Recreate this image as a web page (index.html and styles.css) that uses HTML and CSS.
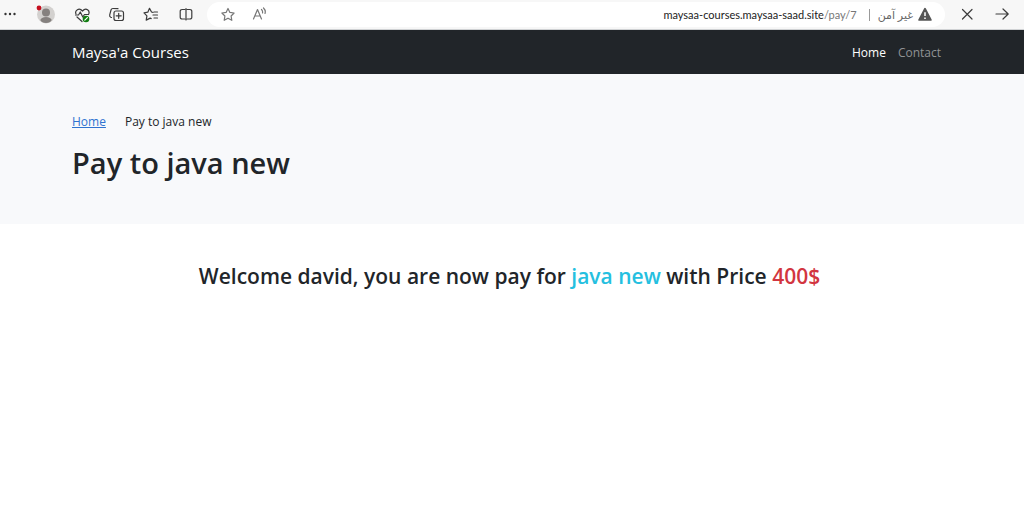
FILE: index.html
```html
<!DOCTYPE html>
<html lang="en">
<head>
<meta charset="utf-8">
<meta name="viewport" content="width=device-width, initial-scale=1">
<title>Pay to java new</title>
<link rel="stylesheet" href="styles.css">
</head>
<body>
<div class="toolbar">
  <div class="tools">
    <button class="tool" aria-label="Menu"><svg viewBox="0 0 20 20"><g fill="#333"><circle cx="5.500" cy="9" r="1.200"/><circle cx="10" cy="9" r="1.200"/><circle cx="14.500" cy="9" r="1.200"/></g></svg></button>
    <button class="tool" aria-label="Profile"><svg viewBox="0 0 20 20"><circle cx="11" cy="9.500" r="9" fill="#d3d1cf"/><circle cx="11" cy="7.500" r="4" fill="#85817f"/><ellipse cx="11" cy="15" rx="5.600" ry="2.900" fill="#85817f"/><circle cx="4" cy="3" r="2.400" fill="#c50f1f"/></svg></button>
    <button class="tool" aria-label="Browser essentials"><svg viewBox="0 0 20 20" class="line"><path d="M6 9C4.500 5.500 9 2 12.500 6 16 2 20.500 5.500 18.500 9.500M7 12l5 4.500"/><path d="M5.500 10h3l1.800-3 2.500 5 1.700-2.500h4"/><circle cx="16" cy="14" r="3.300" fill="#107c10" stroke="none"/><path d="M14.800 15.200l2.600-2.600" stroke="#fff"/></svg></button>
    <button class="tool" aria-label="Collections"><svg viewBox="0 0 20 20" class="line"><rect x="9" y="6" width="9.500" height="9.500" rx="2"/><path d="M13.700 8.300v5M11.200 10.800h5M6.500 12.500l-.8-.3a2 2 0 0 1-1-2.300L6 5a2 2 0 0 1 2-1.500l5 .2"/></svg></button>
    <button class="tool" aria-label="Favorites"><svg viewBox="0 0 20 20" class="line"><path d="M13 7.300l-1.500-.3L9.500 3.300 7.800 7.200l-3.800 .6 2.900 3-.7 4.300 4-2 1 .5M14 7h3.500M13 10h4.500M14 13h3.500"/></svg></button>
    <button class="tool" aria-label="Split screen"><svg viewBox="0 0 20 20" class="line"><path d="M9.800 4.500H7a1.800 1.800 0 0 0-1.800 1.800v5.900A1.800 1.800 0 0 0 7 14h2.800M12.200 4.500H15a1.800 1.800 0 0 1 1.800 1.800v5.900A1.800 1.800 0 0 1 15 14h-2.800M11 3.500v11.500"/></svg></button>
  </div>
  <div class="address">
    <button class="tool" aria-label="Add to favorites"><svg viewBox="0 0 20 20" class="line pale"><path d="M10 3.500l1.900 3.900 4.200.6-3 3 .7 4.300L10 13.200l-3.800 2.100.7-4.300-3-3 4.200-.6z"/></svg></button>
    <button class="tool" aria-label="Read aloud"><svg viewBox="0 0 20 20" class="line pale"><path d="M3.500 14L7.500 4.500l4 9.500M5 11h5M11.500 4.500q1.500 1.500 1 3.500M13.500 3q2.500 2.500 1.500 5.500"/></svg></button>
    <p class="url">maysaa-courses.maysaa-saad.site<span class="path">/pay/7</span></p>
    <button class="security" lang="ar"><span dir="rtl">غير آمن</span><svg viewBox="0 0 20 20"><path d="M10 3L16.500 15.500h-13z" fill="#555" stroke="#555" stroke-linejoin="round" stroke-width="2"/><path d="M10 7v4M10 12.800v1.600" stroke="#fff" stroke-width="1.700"/></svg></button>
  </div>
  <div class="moves">
    <button class="tool" aria-label="Stop"><svg viewBox="0 0 20 20" class="line"><path d="M5.500 4.500l9.500 9.500M15 4.500L5.500 14"/></svg></button>
    <button class="tool" aria-label="Forward"><svg viewBox="0 0 20 20" class="line"><path d="M4 9h12M11 4l5.200 5-5.200 5"/></svg></button>
  </div>
</div>
<nav class="navbar">
  <div class="container nav-row">
    <a class="brand" href="#">Maysa'a Courses</a>
    <div class="links"><a class="active" href="#">Home</a><a href="#">Contact</a></div>
  </div>
</nav>
<header class="page-header">
  <div class="container">
    <div class="breadcrumb"><a href="#">Home</a><span>Pay to java new</span></div>
    <h1>Pay to java new</h1>
  </div>
</header>
<main class="container">
  <h2>Welcome david, you are now pay for <span class="course">java new</span> with Price <span class="price">400$</span></h2>
</main>
</body>
</html>
```
FILE: styles.css
```css
* { box-sizing: border-box; }
body {
  margin: 0;
  background: #fff;
  color: #212529;
  font: 12px/20px "Open Sans", "Noto Sans", "DejaVu Sans", sans-serif;
}
button { border: 0; padding: 0; background: none; color: inherit; font: inherit; }
svg { display: block; width: 20px; height: 20px; }
.line { fill: none; stroke: #3c3c3c; stroke-width: 1.2; stroke-linecap: round; stroke-linejoin: round; }
.pale { stroke: #777; }
.toolbar {
  display: flex;
  align-items: center;
  gap: 12px;
  padding: 0 12px 0 0;
  height: 30px;
  background: #f7f7f7;
  border-bottom: 1px solid #d0d2d4;
}
.tools, .moves { display: flex; gap: 15px; }
.tool { width: 20px; height: 20px; }
.address {
  flex: 1;
  display: flex;
  align-items: center;
  gap: 12px;
  height: 25px;
  padding: 0 11px;
  border-radius: 13px;
  background: #fff;
}
.url { flex: 1; margin: 0; text-align: right; font-family: Lato, sans-serif; font-size: 11px; color: #222; }
.path { color: #777; }
.security {
  display: flex;
  align-items: center;
  gap: 3px;
  padding-left: 8px;
  font-size: 11px;
  line-height: 12px;
  color: #666;
  border-left: 1px solid #999;
}
.security svg { width: 18px; height: 18px; margin: -3px 0; }
.container { margin: 0 auto; padding: 0 77px 0 72px; }
.navbar { background: #212529; color: #fff; }
.nav-row { display: flex; align-items: center; justify-content: space-between; height: 44px; padding-right: 83px; }
.navbar a { text-decoration: none; }
.brand { color: #fff; font-size: 15px; }
.links { display: flex; gap: 12px; line-height: 22px; padding-top: 1px; }
.links a { color: #909294; }
.links a.active { color: #fff; }
.page-header { padding: 37px 0 40px; background: #f8f9fb; }
.breadcrumb { display: flex; gap: 19px; line-height: 22px; }
.breadcrumb a { color: #2f73d0; }
h1, h2 { margin: 0; font-weight: 600; }
h1 { margin-top: 9px; font-size: 29px; line-height: 42px; }
h2 { margin-top: 37px; font-size: 21px; line-height: 30px; text-align: center; }
.course { color: #25bfe0; }
.price { color: #d23540; }
```
